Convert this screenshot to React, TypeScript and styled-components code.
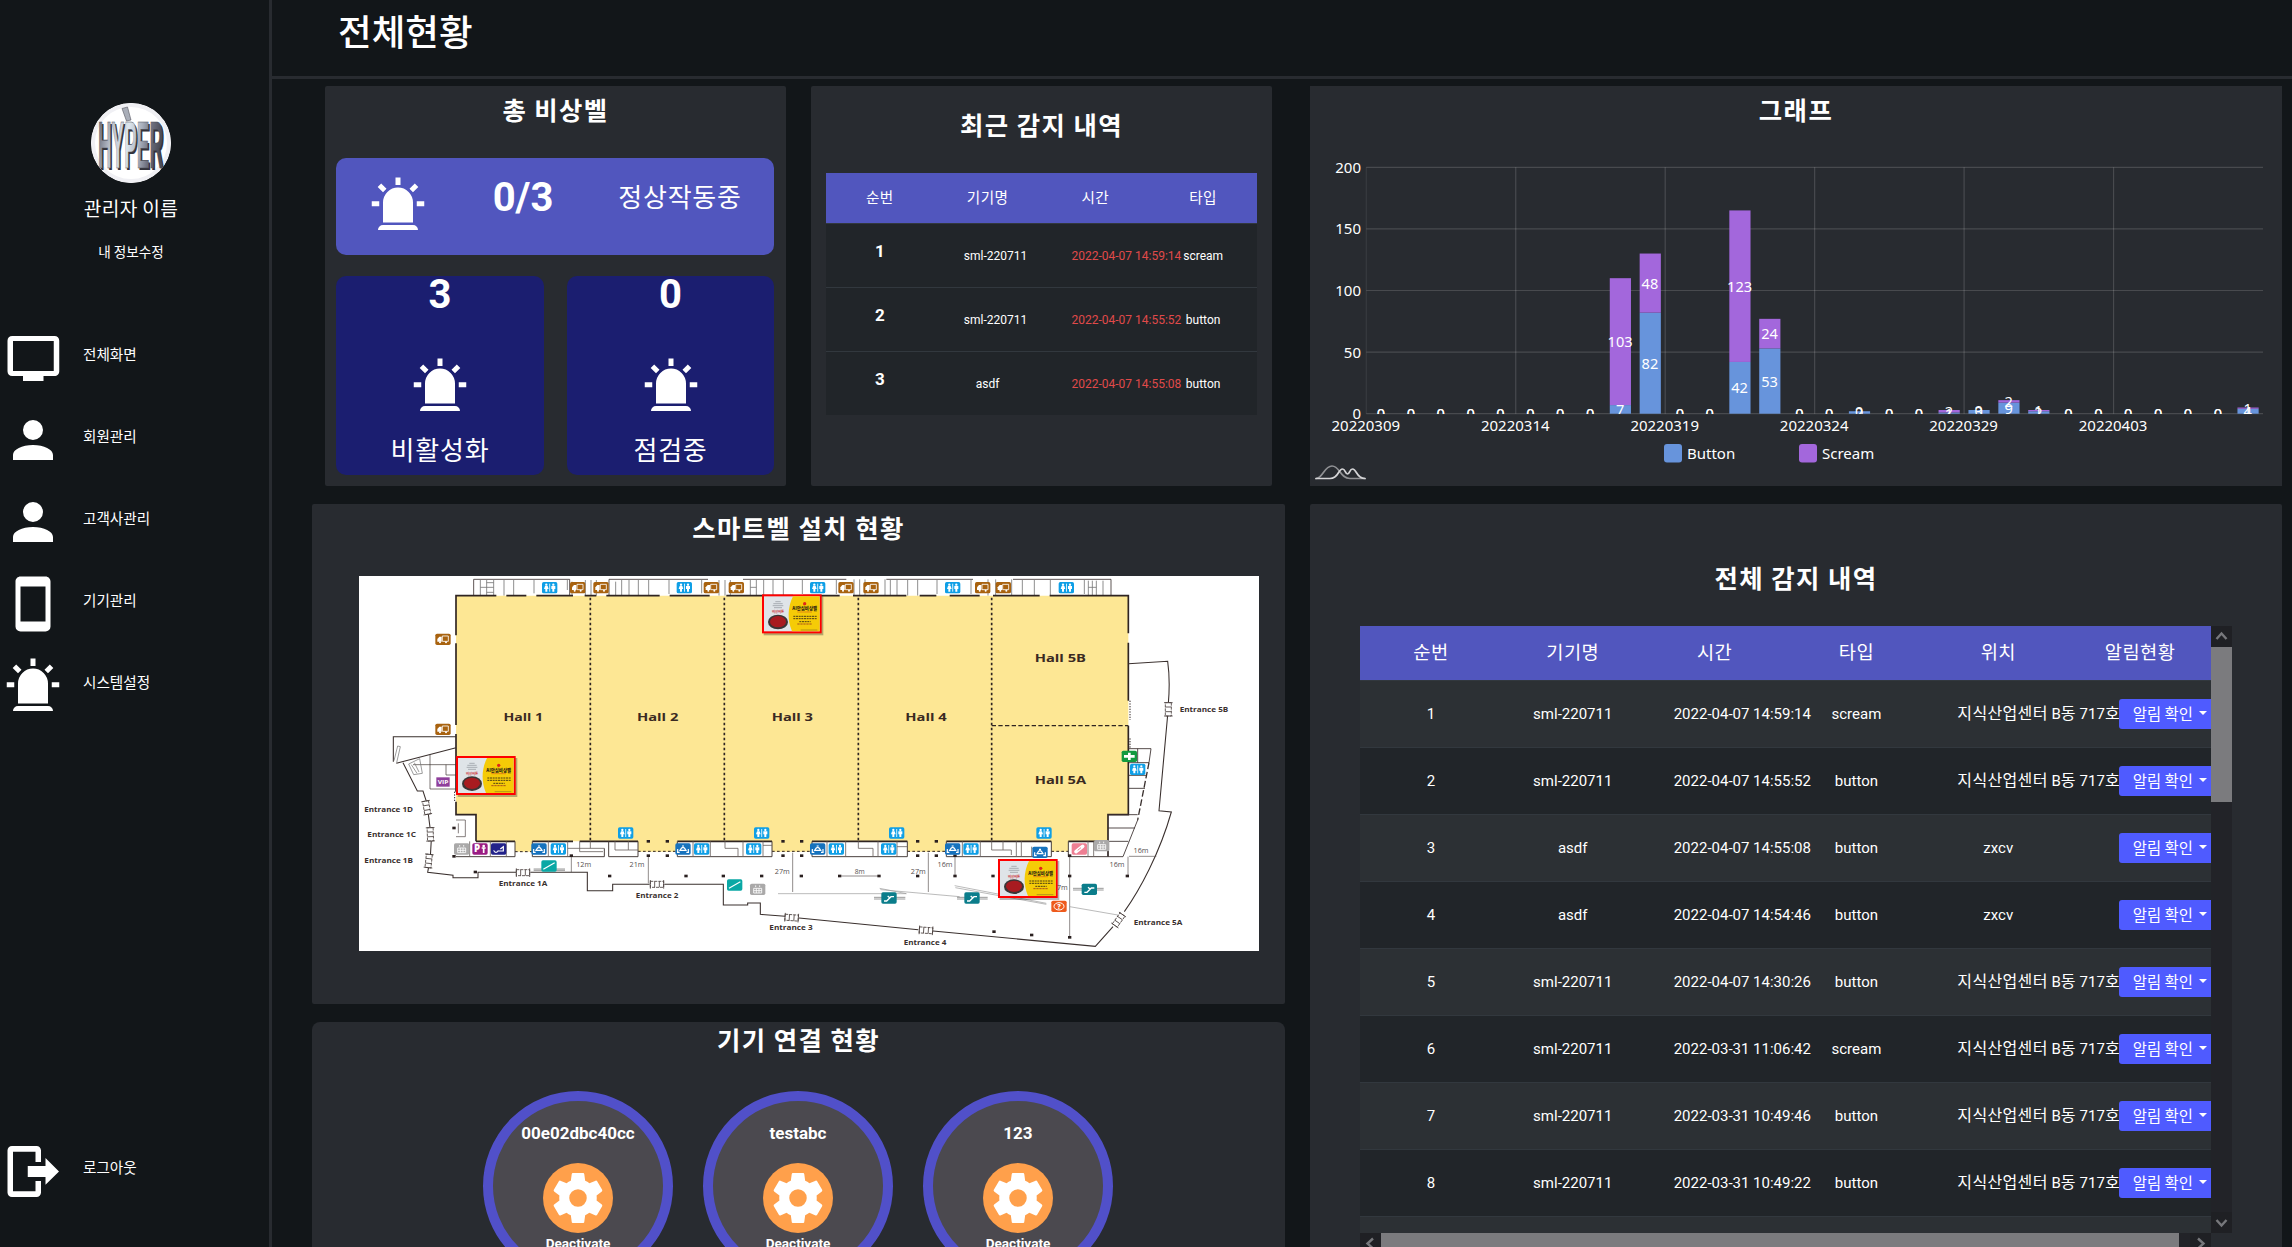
import React from "react";
import styled, { createGlobalStyle } from "styled-components";

const latin = `Roboto, "Noto Sans CJK KR", sans-serif`;
const hangul = `"Noto Sans CJK KR", sans-serif`;

const Global = createGlobalStyle`
  * { box-sizing: border-box; }
  html, body { margin: 0; padding: 0; background: #121619; }
  body { font-family: ${latin}; color: #fff; overflow: hidden; }
`;

const Page = styled.div`
  display: flex;
  width: 2292px;
  height: 1247px;
  overflow: hidden;
  background: #121619;
`;

/* ---------- sidebar ---------- */

const Sidebar = styled.aside`
  display: flex;
  flex-direction: column;
  width: 272px;
  flex: none;
  border-right: 3px solid #282b30;
  padding-top: 103px;
`;

const Profile = styled.div`
  display: flex;
  flex-direction: column;
  align-items: center;
  width: 262px;
  height: 225px;
  font-family: ${hangul};
`;

const Avatar = styled.div`
  width: 80px;
  height: 80px;
  border-radius: 50%;
  overflow: hidden;
  background: #fff;
`;

const ProfileName = styled.div`
  margin-top: 11px;
  font-size: 19.2px;
  line-height: 28px;
  letter-spacing: 0.35px;
`;

const ProfileLink = styled.a`
  margin-top: 19px;
  font-size: 13.6px;
  line-height: 20px;
`;

const MenuItem = styled.a<{ $last?: boolean }>`
  display: flex;
  align-items: flex-start;
  height: 82px;
  padding-left: 3px;
  gap: 20px;
  margin-top: ${(p) => (p.$last ? "403px" : "0")};
`;

const MenuLabel = styled.span`
  font-family: ${hangul};
  font-size: 14.6px;
  line-height: 22px;
  padding-top: 15px;
`;

const Icon60 = styled.svg`
  width: 60px;
  height: 60px;
  flex: none;
  display: block;
  fill: #fff;
  overflow: visible;
`;

/* ---------- main frame ---------- */

const Main = styled.main`
  flex: 1;
  min-width: 0;
  display: flex;
  flex-direction: column;
`;

const Header = styled.header`
  height: 79px;
  flex: none;
  border-bottom: 3px solid #282b30;
  padding: 6px 0 0 66px;
`;

const PageTitle = styled.h1`
  margin: 0;
  font: 500 36.6px / 50px ${hangul};
`;

const Content = styled.div`
  flex: 1;
  display: grid;
  grid-template-columns: 973px 972px;
  column-gap: 25px;
  padding: 7px 10px 0 40px;
`;

const Column = styled.div`
  display: flex;
  flex-direction: column;
  gap: 18px;
  min-width: 0;
`;

const TopRow = styled.div`
  display: grid;
  grid-template-columns: 461px 461px;
  column-gap: 25px;
  padding: 0 13px;
`;

const Card = styled.section<{ $h: number; $r?: number }>`
  height: ${(p) => p.$h}px;
  flex: none;
  background: #282b30;
  border-radius: ${(p) => p.$r ?? 2}px;
  overflow: hidden;
`;

const CardTitle = styled.h2<{ $top: number; $gap: number }>`
  margin: 0;
  padding: ${(p) => p.$top}px 0 ${(p) => p.$gap}px;
  text-align: center;
  font: 700 25.4px / 34px ${hangul};
  letter-spacing: 1.4px;
`;

/* ---------- bell status ---------- */

const StatGrid = styled.div`
  display: grid;
  grid-template-columns: 208px 207px;
  column-gap: 23px;
  row-gap: 21px;
  padding: 0 12px 0 11px;
`;

const StatWide = styled.div`
  grid-column: 1 / 3;
  height: 97px;
  border-radius: 10px;
  background: #5156be;
  display: grid;
  grid-template-columns: 124px 126px 188px;
  justify-items: center;
  align-items: start;
`;

const StatBox = styled.div`
  height: 199px;
  border-radius: 10px;
  background: #1b1e70;
  display: flex;
  flex-direction: column;
  align-items: center;
`;

const BigNumber = styled.div<{ $pad?: number }>`
  font: 700 40px / 40px Roboto, sans-serif;
  height: ${(p) => 40 + (p.$pad ?? 0)}px;
  padding-top: ${(p) => p.$pad ?? 0}px;
  margin-top: -1px;
`;

const StatLabel = styled.div<{ $pad: number }>`
  font: 400 26px / 34px ${hangul};
  letter-spacing: 0.8px;
  padding-top: ${(p) => p.$pad}px;
`;

const IconPad = styled.div<{ $top: number }>`
  padding-top: ${(p) => p.$top}px;
`;

/* ---------- recent table ---------- */

const RecentTable = styled.div`
  width: 431px;
  margin-left: 15px;
`;

const RecentRow = styled.div<{ $head?: boolean }>`
  display: grid;
  grid-template-columns: repeat(4, 107.75px);
  height: ${(p) => (p.$head ? 50 : 64)}px;
  background: ${(p) => (p.$head ? "#5156be" : "#212529")};
  border-top: ${(p) => (p.$head ? "0" : "1px solid #32383e")};
`;

const RecentHead = styled.div`
  text-align: center;
  font: 400 14.6px / 48px ${hangul};
  letter-spacing: 0.5px;
`;

const RecentNo = styled.div`
  text-align: center;
  font: 700 17px / 20px Roboto, sans-serif;
  padding-top: 17px;
`;

const RecentCell = styled.div<{ $red?: boolean }>`
  padding: 23px 30px 0;
  text-align: center;
  white-space: nowrap;
  font-size: 12px;
  line-height: 18px;
  color: ${(p) => (p.$red ? "#e04a4a" : "#fff")};
`;

/* ---------- full log table ---------- */

const LogFrame = styled.div`
  display: grid;
  grid-template-columns: 851px 21px;
  grid-template-rows: 607px 21px;
  margin-left: 50px;
`;

const LogTable = styled.div`
  overflow: hidden;
`;

const LogRow = styled.div<{ $kind: "head" | "odd" | "even" }>`
  display: grid;
  grid-template-columns: repeat(6, 141.83px);
  height: ${(p) => (p.$kind === "head" ? 54 : 67)}px;
  background: ${(p) =>
    p.$kind === "head" ? "#5156be" : p.$kind === "odd" ? "#2c3034" : "#212529"};
  border-top: ${(p) => (p.$kind === "head" ? "0" : "1px solid #32383e")};
`;

const LogHead = styled.div`
  text-align: center;
  font: 400 18.7px / 49px ${hangul};
  letter-spacing: 0.4px;
`;

const LogCell = styled.div`
  padding: 0 30px;
  text-align: center;
  white-space: nowrap;
  font-size: 15px;
  line-height: 66px;
`;

const Hangul = styled.span`
  font-family: ${hangul};
  font-size: 16px;
  letter-spacing: 0.35px;
  line-height: 20px;
`;

const ButtonCell = styled.div`
  padding: 18px 0 0 49.6px;
`;

const CheckButton = styled.button`
  display: flex;
  align-items: center;
  gap: 6.5px;
  width: 102px;
  height: 30px;
  padding: 0 0 2px 14px;
  border: 0;
  border-radius: 3px;
  background: #4f5bff;
  color: #fff;
  white-space: nowrap;
  font: 400 15.4px / 20px ${hangul};
  &::after {
    content: "";
    border: 4.5px solid transparent;
    border-top-color: #fff;
    border-bottom: 0;
  }
`;

const ScrollV = styled.div`
  display: flex;
  flex-direction: column;
  background: #222328;
`;

const ScrollH = styled.div`
  display: flex;
  background: #222328;
`;

const ScrollArrow = styled.svg`
  width: 21px;
  height: 21px;
  flex: none;
  background: #1f2024;
  fill: none;
  stroke: #77787c;
  stroke-width: 2.4;
`;

const ThumbV = styled.div`
  height: 155px;
  background: #7b7b7e;
`;

const ThumbH = styled.div`
  width: 798px;
  background: #7b7b7e;
`;

const Spacer = styled.div`
  flex: 1;
`;

/* ---------- devices ---------- */

const Devices = styled.div`
  display: flex;
  justify-content: center;
  gap: 30px;
  padding-right: 1px;
`;

const Device = styled.div`
  width: 190px;
  height: 190px;
  flex: none;
  border-radius: 50%;
  border: 10px solid #5150c9;
  background: #4b494f;
  display: flex;
  flex-direction: column;
  align-items: center;
  padding-top: 22px;
  font-weight: 700;
`;

const DeviceName = styled.div`
  font-size: 17px;
  line-height: 20px;
`;

const Gear = styled.div`
  width: 70px;
  height: 70px;
  border-radius: 50%;
  background: #ffa04b;
  margin-top: 20px;
  padding: 5px;
`;

const DeviceState = styled.div`
  font-size: 13.6px;
  line-height: 18px;
  margin-top: 1px;
`;

const FloorMap = styled.svg`
  display: block;
  width: 900px;
  height: 375px;
  margin-left: 47px;
  background: #fff;
`;

const Chart = styled.svg`
  display: block;
  width: 972px;
  height: 340px;
`;

/* ---------- icons ---------- */

const P = {
  alarm:
    "M6,6.9L3.87,4.78L5.28,3.37L7.4,5.5L6,6.9M13,1V4H11V1H13M20.13,4.78L18,6.9L16.6,5.5L18.72,3.37L20.13,4.78M4.5,10.5V12.5H1.5V10.5H4.5M19.5,10.5H22.5V12.5H19.5V10.5M6,20H18A2,2 0 0,1 20,22H4A2,2 0 0,1 6,20M12,5A6,6 0 0,1 18,11V19H6V11A6,6 0 0,1 12,5Z",
  account:
    "M12,4A4,4 0 0,1 16,8A4,4 0 0,1 12,12A4,4 0 0,1 8,8A4,4 0 0,1 12,4M12,14C16.42,14 20,15.79 20,18V20H4V18C4,15.79 7.58,14 12,14Z",
  phone:
    "M17,19H7V5H17M17,1H7C5.89,1 5,1.89 5,3V21A2,2 0 0,0 7,23H17A2,2 0 0,0 19,21V3C19,1.89 18.1,1 17,1Z",
  monitor:
    "M20.3,17.2H4V5.2H20.3V17.2M20.6,3.2H3.7C2.6,3.2 1.8,4 1.8,5.1V17.3C1.8,18.4 2.6,19.2 3.7,19.2H8V21.2H16.2V19.2H20.6C21.7,19.2 22.5,18.4 22.5,17.3V5.1C22.5,4 21.7,3.2 20.6,3.2Z",
  logout:
    "M15.2,6.7V3.8C15.2,2.8 14.4,2 13.4,2H3.6C2.6,2 1.8,2.8 1.8,3.8V20.6C1.8,21.6 2.6,22.4 3.6,22.4H13.4C14.4,22.4 15.2,21.6 15.2,20.6V16H13V20.1H4V4.3H13V8.4H15.2V6.7M9.9,10H17V6.8L22.4,12.2L17,17.5V14.4H9.9V10Z",
  cog: "M12,15.5A3.5,3.5 0 0,1 8.5,12A3.5,3.5 0 0,1 12,8.5A3.5,3.5 0 0,1 15.5,12A3.5,3.5 0 0,1 12,15.5M19.43,12.97C19.47,12.65 19.5,12.33 19.5,12C19.5,11.67 19.47,11.34 19.43,11L21.54,9.37C21.73,9.22 21.78,8.95 21.66,8.73L19.66,5.27C19.54,5.05 19.27,4.96 19.05,5.05L16.56,6.05C16.04,5.66 15.5,5.32 14.87,5.07L14.5,2.42C14.46,2.18 14.25,2 14,2H10C9.75,2 9.54,2.18 9.5,2.42L9.13,5.07C8.5,5.32 7.96,5.66 7.44,6.05L4.95,5.05C4.73,4.96 4.46,5.05 4.34,5.27L2.34,8.73C2.21,8.95 2.27,9.22 2.46,9.37L4.57,11C4.53,11.34 4.5,11.67 4.5,12C4.5,12.33 4.53,12.65 4.57,12.97L2.46,14.63C2.27,14.78 2.21,15.05 2.34,15.27L4.34,18.73C4.46,18.95 4.73,19.03 4.95,18.95L7.44,17.94C7.96,18.34 8.5,18.68 9.13,18.93L9.5,21.58C9.54,21.82 9.75,22 10,22H14C14.25,22 14.46,21.82 14.5,21.58L14.87,18.93C15.5,18.67 16.04,18.34 16.56,17.94L19.05,18.95C19.27,19.03 19.54,18.95 19.66,18.73L21.66,15.27C21.78,15.05 21.73,14.78 21.54,14.63L19.43,12.97Z",
};

const Glyph = ({ name }: { name: keyof typeof P }) => (
  <Icon60 viewBox="0 0 24 24">
    <path d={P[name]} fillRule="evenodd" />
  </Icon60>
);

const Logo = () => (
  <svg width="80" height="80" viewBox="0 0 80 80">
    <defs>
      <linearGradient id="chrome" x1="0" x2="1" y1="0" y2="0.15">
        <stop offset="0" stopColor="#5a5c6a" />
        <stop offset="0.25" stopColor="#b9c0cc" />
        <stop offset="0.5" stopColor="#dde6ee" />
        <stop offset="0.7" stopColor="#a9b0bc" />
        <stop offset="0.85" stopColor="#6d6f7d" />
        <stop offset="1" stopColor="#4b4c58" />
      </linearGradient>
    </defs>
    <circle cx="40" cy="40" r="38" fill="#fff" stroke="#f0f0f4" strokeWidth="4" />
    <g fontFamily="Liberation Sans, sans-serif" fontWeight="700" fontSize="66">
      <text x="8.500" y="67" textLength="65" lengthAdjust="spacingAndGlyphs" fill="#33333b">
        HYPER
      </text>
      <text
        x="7"
        y="65"
        textLength="65"
        lengthAdjust="spacingAndGlyphs"
        fill="url(#chrome)"
        stroke="#4a4b54"
        strokeWidth="0.7"
      >
        HYPER
      </text>
    </g>
    <path d="M31 5.500L36.500 4L40 17L35.500 18Z" fill="#a9aeb8" stroke="#55565f" strokeWidth="0.6" />
  </svg>
);

/* ---------- chart ---------- */

const CH = { x0: 56.3, x1: 953, y0: 327.7, y1: 81.3 };
const step = (CH.x1 - CH.x0) / 30;
const unit = (CH.y0 - CH.y1) / 200;
const series: Record<number, [number, number]> = {
  8: [7, 103],
  9: [82, 48],
  12: [42, 123],
  13: [53, 24],
  16: [2, 0],
  19: [1, 2],
  20: [3, 0],
  21: [9, 2],
  22: [2, 1],
  29: [4, 1],
};
const bars = Array.from({ length: 30 }, (_, i) => series[i] ?? [0, 0]);
const ticks = ["20220309", "20220314", "20220319", "20220324", "20220329", "20220403"];

const BarChart = () => (
  <Chart viewBox="0 60 972 340" fontFamily='"Noto Sans", sans-serif' fontSize="15" fill="#fff">
    <clipPath id="plot">
      <rect x={CH.x0} y={CH.y1} width={CH.x1 - CH.x0} height={CH.y0 - CH.y1 + 0.3} />
    </clipPath>
    <g stroke="#fff" strokeOpacity="0.15" strokeWidth="1.2">
      {[0, 50, 100, 150, 200].map((v) => (
        <path key={v} d={`M${CH.x0} ${CH.y0 - v * unit}H${CH.x1}`} />
      ))}
      {ticks.map((t, i) => (
        <path
          key={t}
          d={`M${CH.x0 + i * 5 * step} ${CH.y1}V${CH.y0}`}
          strokeOpacity={i ? 0.15 : 0.07}
        />
      ))}
    </g>
    {[0, 50, 100, 150, 200].map((v) => (
      <text key={v} x="51" y={CH.y0 - v * unit + 5.4} textAnchor="end">
        {v}
      </text>
    ))}
    {ticks.map((t, i) => (
      <text key={t} x={CH.x0 + i * 5 * step - 0.5} y="345.400" textAnchor="middle">
        {t}
      </text>
    ))}
    <g clipPath="url(#plot)">
      {bars.map(([b, s], i) => {
        const x = CH.x0 + i * step + (step - 21.2) / 2;
        const yb = CH.y0 - b * unit;
        const ys = yb - s * unit;
        return (
          <g key={i}>
            {b > 0 && <rect x={x} y={yb} width="21.2" height={b * unit} fill="#6794dc" />}
            {s > 0 && <rect x={x} y={ys} width="21.2" height={s * unit} fill="#a367dc" />}
          </g>
        );
      })}
      {bars.map(([b, s], i) => {
        const cx = CH.x0 + (i + 0.5) * step - 0.3;
        return (
          <g key={i} textAnchor="middle" fontSize="14.6">
            <text x={cx} y={CH.y0 - (b / 2) * unit + 5.6}>{b}</text>
            <text x={cx} y={CH.y0 - (b + s / 2) * unit + 5.6}>{s}</text>
          </g>
        );
      })}
    </g>
    <rect x="354" y="358" width="18" height="18.5" rx="3" fill="#6794dc" />
    <text x="377" y="372.700">Button</text>
    <rect x="489" y="358" width="18" height="18.5" rx="3" fill="#a367dc" />
    <text x="512" y="372.700">Scream</text>
    <g fill="none" strokeWidth="1.7" strokeLinecap="round">
      <path
        d="M6 392.5C13 392.5 14 380 22 380S30 392.5 40 392.5H55"
        stroke="#8f9093"
      />
      <path
        d="M6 392.5H20C29 392.5 28 383 32.500 383C35.500 383 35 388 37.500 388S39.500 383 42.500 383C47 383 46 392.500 55 392.500"
        stroke="#d4d4d6"
      />
    </g>
  </Chart>
);

/* ---------- floor map ---------- */

type Pt = [number, number];

const restrooms: Pt[] = [
  [630, 293], [1034, 293], [1434, 293], [1839, 293], [2180, 293],
  [858, 1029], [1266, 1029], [1671, 1029], [2113, 1029],
  [656, 1077], [1086, 1077], [1242, 1077], [1490, 1077], [1647, 1077], [1894, 1077],
  [2394, 838],
];
const trucks: Pt[] = [
  [714, 293], [784, 293], [1115, 293], [1190, 293], [1519, 293], [1594, 293],
  [1929, 293], [1991, 293], [310, 448], [310, 718],
];
const lounges: Pt[] = [[598, 1077], [1030, 1077], [1434, 1077], [1839, 1077], [2101, 1087]];
const escalators: Pt[] = [[1648, 1224], [1897, 1224], [2249, 1198]];
const elevators: Pt[] = [[366, 1077], [1254, 1198], [2286, 1067]];
const walks: Pt[] = [[628, 1128], [1185, 1185]];
const bells: Pt[] = [[349, 798], [1267, 313], [1975, 1107]];
const dots: Pt[] = [
  [810, 1158], [1039, 1158], [1151, 1158], [1266, 1158], [1385, 1158], [1500, 1158],
  [1618, 1158], [1734, 1158], [1846, 1158], [1960, 1158], [2190, 1158], [2363, 1158],
  [926, 1054], [983, 1054], [1330, 1054], [1386, 1054], [1734, 1054], [1790, 1054],
  [983, 1097], [926, 1097], [1330, 1097], [1386, 1097], [1734, 1097], [1790, 1097],
  [1963, 1325], [2076, 1335], [2190, 1342], [407, 1146], [343, 1099], [343, 1014],
  [1846, 1097], [695, 1097], [2190, 1097],
];
const halls: [string, number, number, number][] = [
  ["Hall 1", 551, 692, 119], ["Hall 2", 954, 692, 124], ["Hall 3", 1358, 692, 124],
  ["Hall 4", 1759, 692, 124], ["Hall 5B", 2162, 517, 154], ["Hall 5A", 2162, 881, 154],
];
const entrances: [string, number, number, number][] = [
  ["Entrance 1D", 147, 966, 146], ["Entrance 1C", 156, 1041, 146],
  ["Entrance 1B", 147, 1119, 146], ["Entrance 1A", 550, 1187, 146],
  ["Entrance 2", 952, 1223, 128], ["Entrance 3", 1354, 1320, 130],
  ["Entrance 4", 1756, 1364, 128], ["Entrance 5A", 2455, 1305, 146],
  ["Entrance 5B", 2593, 665, 146],
];
const lengths: [string, number, number][] = [
  ["12m", 732, 1130], ["21m", 892, 1130], ["27m", 1328, 1151], ["8m", 1560, 1153],
  ["27m", 1736, 1151], ["16m", 1816, 1130], ["27m", 2162, 1200], ["16m", 2404, 1090],
  ["16m", 2332, 1130],
];
const gates: [number, number, number][] = [
  [261, 953, 80], [272, 1033, 88], [267, 1113, 96], [550, 1148, 0], [952, 1183, 0],
  [1356, 1283, 4], [1759, 1321, 4], [2337, 1290, -55], [2486, 658, 90],
];

const Badge = ({ at, fill, children }: { at: Pt; fill: string; children?: React.ReactNode }) => (
  <g transform={`translate(${at[0]} ${at[1]})`}>
    <rect x="-23" y="-17" width="46" height="34" rx="5" fill={fill} />
    {children}
  </g>
);

const Bell = ({ at }: { at: Pt }) => (
  <g transform={`translate(${at[0]} ${at[1]})`}>
    <rect x="5" y="6" width="179" height="117" fill="#000" opacity="0.28" />
    <rect x="0" y="0" width="179" height="117" fill="#f00" />
    <rect x="6" y="6" width="167" height="105" fill="#dfe4e8" />
    <path d="M93 6H173V111H90C76 78 76 40 93 6Z" fill="#f5cb07" />
    <g stroke="#8c9299" strokeWidth="2">
      <path d="M40 22h16M34 28h28M32 34h32M36 40h24" />
    </g>
    <ellipse cx="48" cy="83" rx="30" ry="22" fill="#3b3536" />
    <ellipse cx="48" cy="82" rx="24" ry="17" fill="#a81b20" />
    <text x="48" y="57" fontSize="10" textAnchor="middle" fill="#c33" fontFamily={hangul} fontWeight="700">
      비상버튼
    </text>
    <circle cx="128" cy="28" r="5" fill="#e0261b" />
    <text x="91" y="48" fontSize="15" fill="#332a12" fontFamily={hangul} fontWeight="900" textLength="74" lengthAdjust="spacingAndGlyphs">
      AI안심비상벨
    </text>
    <path d="M106 53h44" stroke="#d8661b" strokeWidth="2" />
    <path d="M94 66h70M94 73h70M112 82h34" stroke="#4e4113" strokeWidth="3" strokeDasharray="6 2" />
    <path d="M106 89h44" stroke="#a8521b" strokeWidth="3" strokeDasharray="7 2" />
    <path d="M116 107h50" stroke="#8f7a22" strokeWidth="2" />
  </g>
);

const MapDrawing = () => (
  <FloorMap viewBox="58 258 2700 1125" preserveAspectRatio="none">
    <g fill="none" stroke="#3d3331" strokeWidth="2.5">
      <path d="M402 317V268H690V317M808 268H1105M808 268V317M1210 268H1520M1640 268H1900M2020 268H2314V317" />
      <path d="M422 268V317M441 268V317M462 268V317M493 268V317M522 268V317M583 268V310M683 268V300M441 278H462M441 307H462" stroke="#777" />
      <path d="M697 275V317M737 270V317M754 270V317M770 270V317M828 275V317M846 268V317M868 268V317M896 268V317M927 268V317M988 268V312M1086 268V310M1138 270V317M1156 270V317M1172 270V317" stroke="#777" />
      <path d="M1232 268V317M1250 268V317M1272 268V317M1300 268V317M1331 268V317M1388 268V312M1490 268V312M1543 268V317M1560 268V317M1576 268V317M1636 268V317M1652 268V317M1672 268V317M1704 268V317M1734 268V317M1792 268V312M1894 268V312M1945 268V317M1968 268V317" stroke="#777" />
      <path d="M2016 268V317M2048 268V317M2084 268V317M2132 268V317M2234 268V312M2246 272V317M2258 272V317M2270 272V317M2290 272V317M422 292H462M1232 292H1250M2246 292H2270" stroke="#777" />
    </g>
    <path
      d="M349 317H2366V974H2305V1054H2186V1085H2135V1054H1820V1085H1703V1054H1417V1085H1297V1054H1013V1085H895V1054H578V1085H526V1054H409V974H349Z"
      fill="#fde794"
    />
    <g fill="none" stroke="#2f2422" strokeWidth="5">
      <path d="M349 436V317H470M500 317H560M590 317H700M735 317H770M800 317H960M990 317H1110M1160 317H1360M1390 317H1500M1540 317H1700M1740 317H1790M1830 317H1920M1960 317H2100M2130 317H2366V430M2366 458V632M2366 707V974H2305V1100" />
      <path d="M349 460V705M349 732V905M349 935V974H409V1054M409 1054H526M578 1054H700M720 1054H895M1013 1054H1297M1417 1054H1703M1820 1054H2135M2186 1054H2305" />
    </g>
    <g fill="none" stroke="#2f2422" strokeWidth="5" strokeDasharray="8 7">
      <path d="M752 323V1054M1154 323V1054M1556 323V1054M1956 323V1054" />
      <path d="M1956 707H2366" strokeWidth="4" strokeDasharray="13 7" />
      <path d="M526 1085H578M895 1084H1013M1297 1084H1417M1703 1084H1820M2135 1084H2186" strokeWidth="3" />
      <path d="M2371 632V690M2371 745V776M345 905V935" strokeWidth="3" strokeDasharray="4 4" />
    </g>
    <g fill="none" stroke="#4a403e" strokeWidth="3">
      <path d="M526 1054V1100H349M578 1054V1100H794V1075M807 1054V1100H895V1054M1013 1054V1100H1297V1054M1417 1054V1100H1703V1054M1820 1054V1100H2135V1054M2186 1054V1100H2305" />
      <path d="M390 1054V1100M452 1054V1100M500 1054V1100M626 1054V1100M684 1054V1100M684 1075H794M720 1054V1085H790M752 1054V1075M826 1054V1080H866V1054M866 1080H895M1060 1054V1100M1112 1054V1100M1156 1054V1075H1195V1100M1210 1054V1100M1270 1054V1100M1270 1066H1297" stroke="#6c6462" strokeWidth="2.500" />
      <path d="M1462 1054V1100M1518 1054V1100M1556 1054V1075H1600V1100M1615 1054V1100M1672 1054V1100M1672 1070H1703M1868 1054V1100M1922 1054V1100M1956 1054V1080H2015V1095M1990 1054V1080M2030 1054V1100M2045 1054V1100M2076 1070V1100M2245 1054V1100M2262 1054V1100" stroke="#6c6462" strokeWidth="2.500" />
      <path d="M349 990H377V1040H349M356 1000V1030" strokeWidth="2" />
    </g>
    <g fill="none" stroke="#3a302e" strokeWidth="3.2">
      <path d="M349 740H161V815M170 820L349 773M190 818L233 903H250L262 940M265 965L272 1020M275 1048L272 1100M268 1125L264 1147L340 1156V1163H415V1147H530M572 1147H743V1202H819V1183H930M974 1183H1151V1245H1224V1239H1262V1273L1336 1279M1378 1284L1736 1319M1780 1323L2267 1369L2320 1310M2354 1265C2400 1200 2460 1090 2495 966L2458 962L2484 675M2486 640Q2492 570 2484 514L2366 521" />
      <path d="M271 795V897H349M220 824H349M319 824V855H349" strokeWidth="2" />
      <path d="M163 812L174 768L182 770L171 818M207 822L240 806L248 850L222 854ZM215 824L232 850M224 818L238 846" strokeWidth="2.200" stroke="#777" />
      <path d="M2366 776H2434L2428 818H2366M2394 776V818M2366 856H2422M2366 895H2416M2305 974H2394M2305 1014H2386M2305 1054H2366M2305 1100H2350L2394 990" strokeWidth="2.600" />
      <path d="M2428 818L2394 990" strokeWidth="4" strokeDasharray="20 8" />
    </g>
    <g fill="none" stroke="#5b5351" strokeWidth="2">
      <path d="M695 1100V1147M926 1100V1180M1359 1088V1206M1766 1088V1206M1846 1100V1156M2190 1100V1340M2365 1100V1156M1505 1158H1614M2368 1099H2450" />
      <path d="M1315 1211H1700L1620 1195M1622 1199L1860 1220M1845 1187L2120 1240M1847 1193L2120 1243M2190 1250L2340 1276" stroke="#999" />
      <path d="M582 1137H676M582 1141H676M1603 1222H1697M1603 1227H1697M1852 1222H1944M1852 1227H1944M2200 1195H2292M2200 1200H2292" stroke="#666" />
    </g>
    {gates.map(([x, y, r], i) => (
      <g key={i} transform={`translate(${x} ${y}) rotate(${r})`} stroke="#4a403e" strokeWidth="2.500" fill="#fff">
        <rect x="-20" y="-9" width="40" height="18" strokeDasharray="9 3" />
        <path d="M-20 -13V13M20 -13V13M-7 -9V9M7 -9V9" />
      </g>
    ))}
    {dots.map(([x, y], i) => (
      <rect key={i} x={x - 5} y={y - 4} width="10" height="8" fill="#2a2020" />
    ))}
    {restrooms.map((p, i) => (
      <Badge key={i} at={p} fill="#0f9fe6">
        <g fill="#fff">
          <circle cx="-10" cy="-9" r="3.500" />
          <path d="M-14 -5H-6L-3 4H-7V12H-13V4H-17Z" />
          <rect x="-1" y="-12" width="2.500" height="24" />
          <circle cx="11" cy="-9" r="3.500" />
          <path d="M5 -5H17V4H14V12H8V4H5Z" />
        </g>
      </Badge>
    ))}
    {trucks.map((p, i) => (
      <Badge key={i} at={p} fill="#a8620f">
        <path d="M-2 -10H16V6H-2Z" fill="none" stroke="#fff" strokeWidth="2.500" />
        <path d="M-17 7V-1L-11 -8H-4V7Z" fill="#fff" />
        <circle cx="-9" cy="9" r="3" fill="#fff" />
        <circle cx="9" cy="9" r="3" fill="#fff" />
      </Badge>
    ))}
    {lounges.map((p, i) => (
      <Badge key={i} at={p} fill="#1672bd">
        <path d="M-16 10V0M16 10V0M-9 4Q0 -14 9 4ZM-18 10H-10M18 10H10M-3 -9H3" stroke="#fff" strokeWidth="3.500" fill="none" />
      </Badge>
    ))}
    {escalators.map((p, i) => (
      <Badge key={i} at={p} fill="#0b7d8b">
        <path d="M-15 9H-7L6 -4H15M-4 -6L2 -1" stroke="#fff" strokeWidth="4" fill="none" />
      </Badge>
    ))}
    {walks.map((p, i) => (
      <Badge key={i} at={p} fill="#0aa8a5">
        <path d="M-17 10L17 -10" stroke="#fff" strokeWidth="3.500" />
      </Badge>
    ))}
    {elevators.map((p, i) => (
      <Badge key={i} at={p} fill="#aaa9a9">
        <path d="M-12 -3H12V11H-12ZM-4 -3V11M4 -3V11M-12 4H12M-6 -12V-7M6 -12V-7" stroke="#fff" strokeWidth="2.500" fill="none" />
      </Badge>
    ))}
    <Badge at={[421, 1077]} fill="#9a1c83">
      <text x="-18" y="10" fontSize="29" fontWeight="800" fill="#fff" fontFamily="Open Sans, sans-serif">P</text>
      <path d="M11 -4V12M5 -3H17" stroke="#fff" strokeWidth="5" />
      <circle cx="11" cy="-9" r="4" fill="#fff" />
    </Badge>
    <Badge at={[477, 1077]} fill="#22228a">
      <path d="M-15 4C-12 12 -4 12 -1 4M-1 6H14V-7L5 0" stroke="#fff" strokeWidth="3.500" fill="none" />
    </Badge>
    <g transform="translate(310 876)">
      <rect x="-20" y="-14" width="40" height="28" fill="#8f3f9c" />
      <text x="-16" y="7" fontSize="18" fontWeight="700" fill="#fff" textLength="32" lengthAdjust="spacingAndGlyphs" fontFamily="Open Sans, sans-serif">VIP</text>
    </g>
    <Badge at={[2369, 799]} fill="#129a3f">
      <path d="M0 -11V11M-16 0H16" stroke="#fff" strokeWidth="8" />
    </Badge>
    <Badge at={[2219, 1077]} fill="#ee7f93">
      <path d="M-10 8L10 -8" stroke="#fff" strokeWidth="11" strokeLinecap="round" />
      <path d="M-5 4L5 -4" stroke="#ee7f93" strokeWidth="3" />
    </Badge>
    <Badge at={[2158, 1249]} fill="#ee5a1c">
      <ellipse rx="15" ry="11" fill="none" stroke="#fff" strokeWidth="3" />
      <text y="8" fontSize="21" fontWeight="800" fill="#fff" textAnchor="middle" fontFamily="Open Sans, sans-serif">?</text>
    </Badge>
    <g fill="#3a2a22" fontFamily='"Open Sans", sans-serif' fontWeight="700" fontSize="33">
      {halls.map(([t, x, y, w]) => (
        <text key={t} x={x - w / 2} y={y} textLength={w} lengthAdjust="spacingAndGlyphs">{t}</text>
      ))}
    </g>
    <g fill="#3a302e" fontFamily='"Open Sans", sans-serif' fontWeight="700" fontSize="20">
      {entrances.map(([t, x, y, w]) => (
        <text key={t} x={x - w / 2} y={y} textLength={w} lengthAdjust="spacingAndGlyphs">{t}</text>
      ))}
    </g>
    <g fill="#55504f" fontFamily='"Open Sans", sans-serif' fontSize="19">
      {lengths.map(([t, x, y], i) => {
        const w = t.length * 15;
        return (
          <text key={i} x={x - w / 2} y={y} textLength={w} lengthAdjust="spacingAndGlyphs">{t}</text>
        );
      })}
    </g>
    {bells.map((p, i) => (
      <Bell key={i} at={p} />
    ))}
  </FloorMap>
);

/* ---------- data ---------- */

const menu: [keyof typeof P, string][] = [
  ["monitor", "전체화면"],
  ["account", "회원관리"],
  ["account", "고객사관리"],
  ["phone", "기기관리"],
  ["alarm", "시스템설정"],
];

const recent = [
  ["1", "sml-220711", "2022-04-07 14:59:14", "scream"],
  ["2", "sml-220711", "2022-04-07 14:55:52", "button"],
  ["3", "asdf", "2022-04-07 14:55:08", "button"],
];

const place = "지식산업센터 B동 717호";
const log = [
  ["1", "sml-220711", "2022-04-07 14:59:14", "scream", place],
  ["2", "sml-220711", "2022-04-07 14:55:52", "button", place],
  ["3", "asdf", "2022-04-07 14:55:08", "button", "zxcv"],
  ["4", "asdf", "2022-04-07 14:54:46", "button", "zxcv"],
  ["5", "sml-220711", "2022-04-07 14:30:26", "button", place],
  ["6", "sml-220711", "2022-03-31 11:06:42", "scream", place],
  ["7", "sml-220711", "2022-03-31 10:49:46", "button", place],
  ["8", "sml-220711", "2022-03-31 10:49:22", "button", place],
];

const mixed = (t: string) =>
  t.split(/([가-힣]+)/).map((s, i) => (i % 2 ? <Hangul key={i}>{s}</Hangul> : s));

export default function App() {
  return (
    <Page>
      <Global />
      <Sidebar>
        <Profile>
          <Avatar>
            <Logo />
          </Avatar>
          <ProfileName>관리자 이름</ProfileName>
          <ProfileLink>내 정보수정</ProfileLink>
        </Profile>
        {menu.map(([icon, label]) => (
          <MenuItem key={label}>
            <Glyph name={icon} />
            <MenuLabel>{label}</MenuLabel>
          </MenuItem>
        ))}
        <MenuItem $last>
          <Glyph name="logout" />
          <MenuLabel>로그아웃</MenuLabel>
        </MenuItem>
      </Sidebar>
      <Main>
        <Header>
          <PageTitle>전체현황</PageTitle>
        </Header>
        <Content>
          <Column>
            <TopRow>
              <Card $h={400}>
                <CardTitle $top={6} $gap={32}>총 비상벨</CardTitle>
                <StatGrid>
                  <StatWide>
                    <IconPad $top={17}>
                      <Glyph name="alarm" />
                    </IconPad>
                    <BigNumber $pad={21}>0/3</BigNumber>
                    <StatLabel $pad={21}>정상작동중</StatLabel>
                  </StatWide>
                  <StatBox>
                    <BigNumber>3</BigNumber>
                    <IconPad $top={41}>
                      <Glyph name="alarm" />
                    </IconPad>
                    <StatLabel $pad={16}>비활성화</StatLabel>
                  </StatBox>
                  <StatBox>
                    <BigNumber>0</BigNumber>
                    <IconPad $top={41}>
                      <Glyph name="alarm" />
                    </IconPad>
                    <StatLabel $pad={16}>점검중</StatLabel>
                  </StatBox>
                </StatGrid>
              </Card>
              <Card $h={400}>
                <CardTitle $top={21} $gap={32}>최근 감지 내역</CardTitle>
                <RecentTable>
                  <RecentRow $head>
                    {["순번", "기기명", "시간", "타입"].map((h) => (
                      <RecentHead key={h}>{h}</RecentHead>
                    ))}
                  </RecentRow>
                  {recent.map(([no, name, time, type]) => (
                    <RecentRow key={no}>
                      <RecentNo>{no}</RecentNo>
                      <RecentCell>{name}</RecentCell>
                      <RecentCell $red>{time}</RecentCell>
                      <RecentCell>{type}</RecentCell>
                    </RecentRow>
                  ))}
                </RecentTable>
              </Card>
            </TopRow>
            <Card $h={500}>
              <CardTitle $top={6} $gap={32}>스마트벨 설치 현황</CardTitle>
              <MapDrawing />
            </Card>
            <Card $h={300} $r={8}>
              <CardTitle $top={0} $gap={35}>기기 연결 현황</CardTitle>
              <Devices>
                {["00e02dbc40cc", "testabc", "123"].map((name) => (
                  <Device key={name}>
                    <DeviceName>{name}</DeviceName>
                    <Gear>
                      <Glyph name="cog" />
                    </Gear>
                    <DeviceState>Deactivate</DeviceState>
                  </Device>
                ))}
              </Devices>
            </Card>
          </Column>
          <Column>
            <Card $h={400} $r={0}>
              <CardTitle $top={6} $gap={20}>그래프</CardTitle>
              <BarChart />
            </Card>
            <Card $h={760}>
              <CardTitle $top={56} $gap={32}>전체 감지 내역</CardTitle>
              <LogFrame>
                <LogTable>
                  <LogRow $kind="head">
                    {["순번", "기기명", "시간", "타입", "위치", "알림현황"].map((h) => (
                      <LogHead key={h}>{h}</LogHead>
                    ))}
                  </LogRow>
                  {log.map((row, i) => (
                    <LogRow key={row[0]} $kind={i % 2 ? "even" : "odd"}>
                      {row.map((cell, j) => (
                        <LogCell key={j}>{mixed(cell)}</LogCell>
                      ))}
                      <ButtonCell>
                        <CheckButton>알림 확인</CheckButton>
                      </ButtonCell>
                    </LogRow>
                  ))}
                  <LogRow $kind="odd" />
                </LogTable>
                <ScrollV>
                  <ScrollArrow viewBox="0 0 21 21">
                    <path d="M5.500 13L10.500 7.500L15.500 13" />
                  </ScrollArrow>
                  <ThumbV />
                  <Spacer />
                  <ScrollArrow viewBox="0 0 21 21">
                    <path d="M5.500 8L10.500 13.500L15.500 8" />
                  </ScrollArrow>
                </ScrollV>
                <ScrollH>
                  <ScrollArrow viewBox="0 0 21 21">
                    <path d="M13 5.500L7.500 10.500L13 15.500" />
                  </ScrollArrow>
                  <ThumbH />
                  <Spacer />
                  <ScrollArrow viewBox="0 0 21 21">
                    <path d="M8 5.500L13.500 10.500L8 15.500" />
                  </ScrollArrow>
                </ScrollH>
              </LogFrame>
            </Card>
          </Column>
        </Content>
      </Main>
    </Page>
  );
}
